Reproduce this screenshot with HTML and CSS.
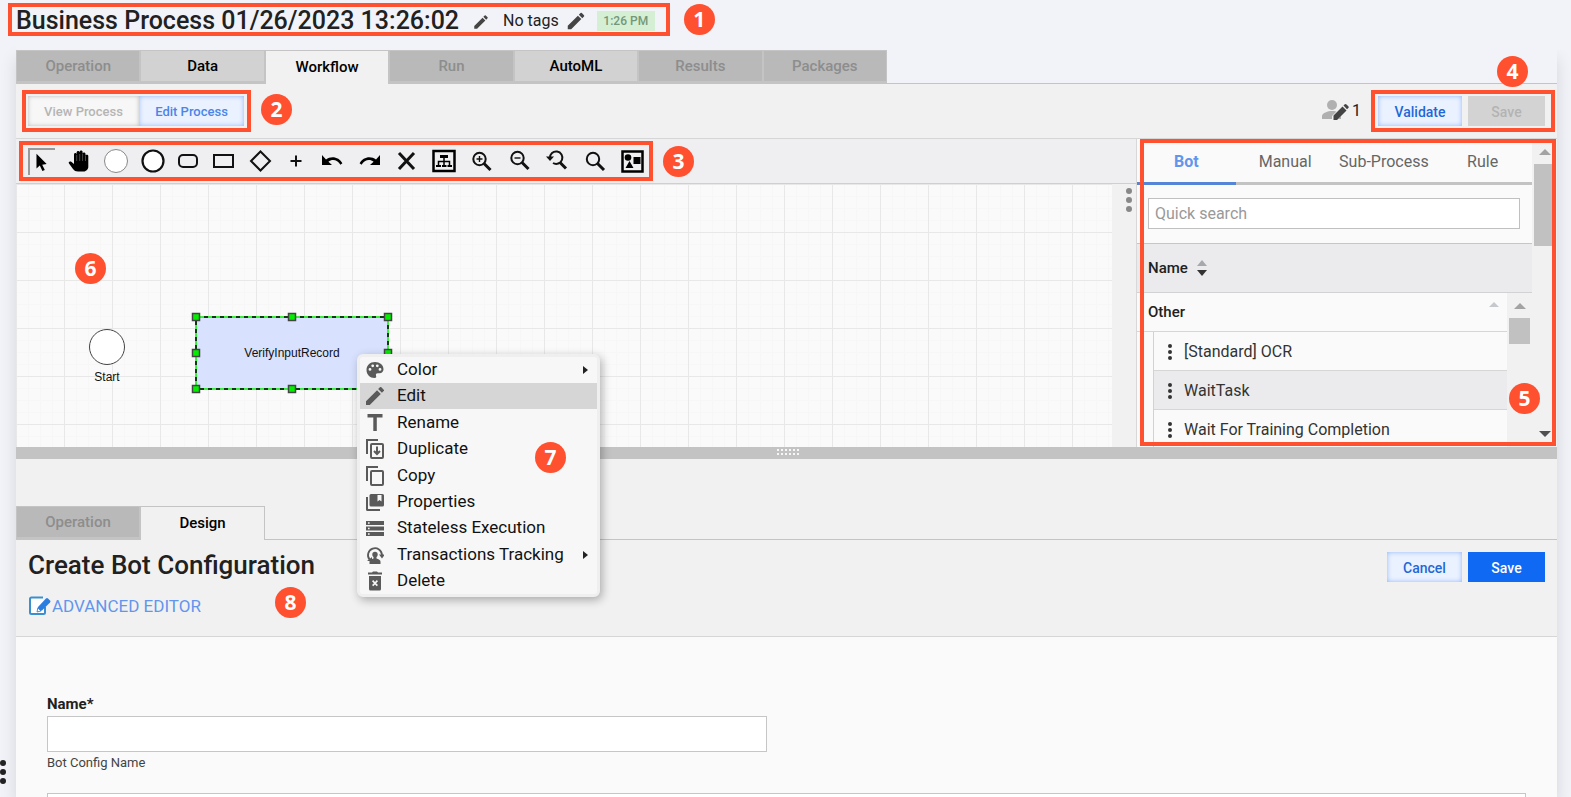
FILE: index.html
```html
<!DOCTYPE html>
<html lang="en">
<head>
    <meta charset="UTF-8">
    <meta name="viewport" content="width=device-width, initial-scale=1.0">
    <title>Business Process - Workflow</title>
    <link rel="stylesheet" href="styles.css">
</head>
<body>
    <header class="page-header">
        <div class="title-row callout">
            <h1>Business Process 01/26/2023 13:26:02</h1>
            <button class="icon-btn title-edit" aria-label="Edit title"><svg width="18" height="18" viewBox="0 0 24 24"><path d="M3 17.25V21h3.750L17.810 9.940l-3.750-3.750L3 17.250zM20.710 7.040a1 1 0 0 0 0-1.410l-2.340-2.340a1 1 0 0 0-1.410 0l-1.830 1.830 3.750 3.750 1.830-1.830z"/></svg></button>
            <span class="tags">No tags</span>
            <button class="icon-btn" aria-label="Edit tags"><svg width="22" height="22" viewBox="0 0 24 24"><path d="M3 17.25V21h3.750L17.810 9.940l-3.750-3.750L3 17.250zM20.710 7.040a1 1 0 0 0 0-1.410l-2.340-2.340a1 1 0 0 0-1.410 0l-1.830 1.830 3.750 3.750 1.830-1.830z"/></svg></button>
            <span class="time">1:26 PM</span>
            <span class="marker marker-1">1</span>
        </div>
    </header>

    <main class="content">
        <nav class="tabs main-tabs">
            <button class="tab" disabled>Operation</button>
            <button class="tab">Data</button>
            <button class="tab active">Workflow</button>
            <button class="tab" disabled>Run</button>
            <button class="tab">AutoML</button>
            <button class="tab" disabled>Results</button>
            <button class="tab" disabled>Packages</button>
        </nav>

        <div class="action-bar">
            <div class="mode-switch callout">
                <button class="mode" disabled>View Process</button>
                <button class="mode selected">Edit Process</button>
                <span class="marker marker-2">2</span>
            </div>
            <div class="editors">
                <svg width="28" height="22" viewBox="0 0 28 22"><circle cx="11" cy="6" r="5" fill="#b0b0b0"/><path d="M1 20v-3c0-3 6-5 10-5 4 0 9 2 9 5v3z" fill="#b0b0b0"/><path d="M11 21v-4L22 6l5 4-11 11z" fill="#f1f1f1"/><path d="M12.500 21v-4.500l9-9 4 4-9.500 9.500zM22.500 6.500l1-1q1-1 2 0l1.800 1.800q.9.900 0 1.800L26 10.300z" fill="#444"/></svg>
                <span>1</span>
            </div>
            <div class="save-group callout">
                <button class="btn btn-light">Validate</button>
                <button class="btn" disabled>Save</button>
                <span class="marker marker-4">4</span>
            </div>
        </div>

        <section class="workspace">
            <div class="editor">
                <div class="toolbar">
                    <div class="tools callout">
                        <button class="tool pressed" aria-label="Select"><svg width="27" height="27" viewBox="0 0 27 27"><path d="M7 4v16l3.600-3.200 2.800 6 2.600-1.300-2.800-5.600 4.800-.7z"/></svg></button>
                        <button class="tool" aria-label="Pan"><svg width="24" height="26" viewBox="0 0 24 26"><path d="M6 21 2 15.500c-1-1.500 1-2.600 2.600-1.400L7 16V6.500c0-2 2.600-2 2.600 0V4.600c0-2.200 3-2.200 3 0V4c0-2 3-2 3 0v2c0-2 2.900-2 2.900 0v2c0-1.800 2.800-1.800 2.800 0v11c0 2-2 4.500-4.600 4.500H11c-2.300 0-3.800-.8-5-2.500z"/><path d="M9.700 7v6M12.700 6v7M15.600 6v7M18.500 8v5" stroke="#777" stroke-width=".6"/></svg></button>
                        <button class="tool" aria-label="Start event"><svg width="26" height="26" viewBox="0 0 26 26"><circle cx="13" cy="13" r="11.500" fill="#fff" stroke="#888"/></svg></button>
                        <button class="tool" aria-label="End event"><svg width="26" height="26" viewBox="0 0 26 26"><circle cx="13" cy="13" r="10.500" fill="#fff" stroke="#111" stroke-width="2.200"/></svg></button>
                        <button class="tool shape" aria-label="Task"><svg width="24" height="24" viewBox="0 0 24 24" class="line"><rect x="2" y="6" width="18" height="12" rx="4"/></svg></button>
                        <button class="tool shape" aria-label="Rectangle"><svg width="24" height="24" viewBox="0 0 24 24" class="line"><rect x="1" y="6" width="19" height="12"/></svg></button>
                        <button class="tool shape" aria-label="Gateway"><svg width="24" height="24" viewBox="0 0 24 24" class="line"><path d="M11.500 2.500 21 12l-9.500 9.500L2 12z"/></svg></button>
                        <button class="tool shape" aria-label="Add"><svg width="24" height="24" viewBox="0 0 24 24" class="line"><path d="M11 6.500v11M5.500 12h11"/></svg></button>
                        <button class="tool shape" aria-label="Undo"><svg width="24" height="24" viewBox="0 0 24 24"><path d="M1 6v10h10l-3.600-3.200c3.600-3 9.400-2 12 3l2-1.500c-3-6.500-11.400-8-16.400-3.800z"/></svg></button>
                        <button class="tool" aria-label="Redo"><svg width="24" height="24" viewBox="0 0 24 24"><path d="M22 6v10H12l3.600-3.200c-3.600-3-9.400-2-12 3l-2-1.500c3-6.500 11.400-8 16.400-3.800z"/></svg></button>
                        <button class="tool" aria-label="Delete"><svg width="24" height="24" viewBox="0 0 24 24" class="line bold"><path d="m4 4 15 16M19 4 4 20"/></svg></button>
                        <button class="tool wide" aria-label="Auto layout"><svg width="26" height="26" viewBox="0 0 26 26"><path d="M2.500 3h21v20h-21z" fill="none" stroke="#000" stroke-width="2.500"/><path d="M9 7h8v3H9zM5 17h5v2H5zM11 17h4.500v2H11zM16.500 17H21v2h-4.500z"/><path d="M13 10v7M7.500 17v-3.500h11V17" fill="none" stroke="#000" stroke-width="1.500"/></svg></button>
                        <button class="tool wide" aria-label="Zoom in"><svg width="24" height="24" viewBox="0 0 24 24" class="line"><circle cx="9.500" cy="10" r="6.200"/><path d="M9.500 7v6M6.500 10h6" stroke-width="1.400"/><path d="m14 14.500 6.500 6.500" stroke-width="3"/></svg></button>
                        <button class="tool wide" aria-label="Zoom out"><svg width="24" height="24" viewBox="0 0 24 24" class="line"><circle cx="9.500" cy="9" r="6.200"/><path d="M6.500 9h6" stroke-width="1.400"/><path d="m14 13.500 6.500 6.500" stroke-width="3"/></svg></button>
                        <button class="tool wide" aria-label="Reset zoom"><svg width="24" height="24" viewBox="0 0 24 24" class="line"><path d="M4 9a6.200 6.200 0 1 1 3 5"/><path d="m14 13.500 6 6" stroke-width="3"/><path d="M0 7.500h8L4 12z" fill="#111" stroke="none"/></svg></button>
                        <button class="tool wide" aria-label="Zoom"><svg width="24" height="24" viewBox="0 0 24 24" class="line"><circle cx="9" cy="10" r="6.200"/><path d="m13.500 14.500 6.500 6.500" stroke-width="3"/></svg></button>
                        <button class="tool wide" aria-label="Fit"><svg width="26" height="26" viewBox="0 0 26 26"><path d="M1.500 3.500h20v20h-20z" fill="none" stroke="#000" stroke-width="2.500"/><circle cx="7" cy="9.500" r="3.300"/><path d="M12.500 9h7v7h-7zM4.500 20l4-7 4 7z"/></svg></button>
                        <span class="marker marker-3">3</span>
                    </div>
                </div>

                <div class="canvas-row">
                    <div class="canvas">
                        <span class="marker marker-6">6</span>
                        <div class="node-start">
                            <span class="start-circle"></span>
                            <span>Start</span>
                        </div>
                        <div class="node-task">
                            <svg class="selection" width="202" height="82" viewBox="0 0 202 82">
                                <rect x="5" y="5" width="192" height="72" fill="#d8e2ff" stroke="#00f000" stroke-width="1.500"/>
                                <rect x="5" y="5" width="192" height="72" fill="none" stroke="#000" stroke-width="1.500" stroke-dasharray="4"/>
                                <g fill="#00f000" stroke="#444" stroke-width="1.500">
                                    <path d="M1.500 1.500h7v7h-7zM97.500 1.500h7v7h-7zM193.500 1.500h7v7h-7zM1.500 37.500h7v7h-7zM193.500 37.500h7v7h-7zM1.500 73.500h7v7h-7zM97.500 73.500h7v7h-7zM193.500 73.500h7v7h-7z"/>
                                </g>
                            </svg>
                            <span class="task-label">VerifyInputRecord</span>
                        </div>

                        <div class="context-menu" role="menu">
                            <button role="menuitem"><svg width="18" height="18" viewBox="0 0 18 18"><path fill-rule="evenodd" d="M9 1C4 1 .5 4.500.5 9S4 17 8.500 17c1.500 0 2-1 1.600-2-.6-1.700 0-2.700 1.700-2.700h1.700c2.500 0 4-1.700 4-4C17.500 4 13.700 1 9 1zM4 9.800a1.400 1.400 0 1 1 0-2.800 1.400 1.400 0 0 1 0 2.800zM6.700 6.200a1.400 1.400 0 1 1 0-2.800 1.400 1.400 0 0 1 0 2.800zM11.300 6.200a1.400 1.400 0 1 1 0-2.800 1.400 1.400 0 0 1 0 2.800zM14 9.800A1.400 1.400 0 1 1 14 7a1.400 1.400 0 0 1 0 2.800z"/></svg><span>Color</span><i class="arrow"></i></button>
                            <button role="menuitem" class="hover"><svg width="18" height="18" viewBox="3 3 18 18"><path d="M3 17.250V21h3.750L17.810 9.940l-3.750-3.750L3 17.250zM20.710 7.040a1 1 0 0 0 0-1.410l-2.340-2.340a1 1 0 0 0-1.410 0l-1.830 1.830 3.750 3.750 1.830-1.830z"/></svg><span>Edit</span></button>
                            <button role="menuitem"><svg width="18" height="18" viewBox="0 0 18 18"><path d="M1.500 0h15v3.500h-5.700V17H7.300V3.500H1.500z"/></svg><span>Rename</span></button>
                            <button role="menuitem"><svg width="18" height="20" viewBox="0 0 18 20" class="outline"><path d="M1 15V1h11"/><rect x="5" y="5" width="12" height="14" rx="1"/><path d="M11 7.500v7M8 12l3 3 3-3"/></svg><span>Duplicate</span></button>
                            <button role="menuitem"><svg width="18" height="20" viewBox="0 0 18 20" class="outline"><path d="M1 15V1h11"/><rect x="5" y="5" width="12" height="14" rx="1"/></svg><span>Copy</span></button>
                            <button role="menuitem"><svg width="18" height="18" viewBox="0 0 18 18"><path d="M0 4h2v12h12v2H1.500Q0 18 0 16.500z"/><path fill-rule="evenodd" d="M5 1h11.500Q18 1 18 2.500V12q0 1.500-1.500 1.500H5Q3.500 13.500 3.500 12V2.500Q3.500 1 5 1zm6.500 1v6.500l2-1.500 2 1.500V2z"/></svg><span>Properties</span></button>
                            <button role="menuitem"><svg width="18" height="18" viewBox="0 0 18 18"><path fill-rule="evenodd" d="M0 2h18v4H0zM0 7.500h18v4H0zM0 13h18v4H0zM2 3.200v1.600h1.600V3.200zM2 8.700v1.600h1.600V8.700zM2 14.200v1.600h1.600v-1.600z"/></svg><span>Stateless Execution</span></button>
                            <button role="menuitem"><svg width="18" height="18" viewBox="0 0 18 18"><path d="M3.500 13.500A7 7 0 1 1 16 9" fill="none" stroke="#5a5a5a" stroke-width="1.800"/><path d="M13 8.500h6l-3 4zM1 15h5v-4z"/><circle cx="9" cy="8.500" r="2.700"/><path d="M7.500 10h3v2.500c2 .5 4 1.500 4 3V18h-11v-2.500c0-1.500 2-2.500 4-3z"/></svg><span>Transactions Tracking</span><i class="arrow"></i></button>
                            <button role="menuitem"><svg width="18" height="20" viewBox="0 0 18 20"><path d="M2 1.500h4L7 .5h4l1 1h4v2H2z"/><path fill-rule="evenodd" d="M3 5h12v13q0 1.500-1.500 1.500h-9Q3 19.500 3 18zm3 5.300L7.900 12.200 6 14.100l1.200 1.200L9 13.400l1.800 1.900 1.200-1.200-1.900-1.900 1.900-1.900-1.200-1.200L9 11 7.200 9.100z"/></svg><span>Delete</span></button>
                            <span class="marker marker-7">7</span>
                        </div>
                    </div>
                    <button class="canvas-handle dots" aria-label="Panel options"><i></i><i></i><i></i></button>
                </div>
            </div>

            <aside class="palette callout">
                <div class="palette-body">
                    <nav class="palette-tabs">
                        <button class="palette-tab current">Bot</button>
                        <button class="palette-tab">Manual</button>
                        <button class="palette-tab">Sub-Process</button>
                        <button class="palette-tab">Rule</button>
                    </nav>
                    <div class="search-row">
                        <input type="text" placeholder="Quick search" aria-label="Quick search">
                    </div>
                    <div class="name-header">
                        Name
                        <svg width="10" height="18" viewBox="0 0 10 18"><path d="M5 1l5 6H0z" fill="#a5a8ac"/><path d="M5 17 0 11h10z" fill="#333"/></svg>
                    </div>
                    <div class="tree">
                        <div class="tree-body">
                            <div class="group">Other <i class="collapse"></i></div>
                            <ul>
                                <li><span class="dots"><i></i><i></i><i></i></span>[Standard] OCR</li>
                                <li class="shaded"><span class="dots"><i></i><i></i><i></i></span>WaitTask</li>
                                <li><span class="dots"><i></i><i></i><i></i></span>Wait For Training Completion</li>
                            </ul>
                        </div>
                        <div class="scrollbar inner"><i class="up"></i><i class="thumb"></i></div>
                    </div>
                </div>
                <div class="scrollbar outer"><i class="up"></i><i class="thumb"></i><i class="down"></i></div>
                <span class="marker marker-5">5</span>
            </aside>
        </section>

        <div class="splitter"><span></span></div>

        <section class="config">
            <nav class="tabs config-tabs">
                <button class="tab" disabled>Operation</button>
                <button class="tab active">Design</button>
            </nav>
            <div class="config-head">
                <div class="config-title">
                    <h2>Create Bot Configuration</h2>
                    <a href="#editor" class="advanced"><svg width="24" height="20" viewBox="0 0 24 20"><path d="M15 1.500H3.500Q2 1.500 2 3v13.500Q2 18 3.500 18h12Q17 18 17 16.500V11" fill="#fff" stroke="#3a8fd0" stroke-width="2"/><path d="m9 16 1-5 8-8.500q1-1 2 0l2 2q1 1 0 2l-8 8z" fill="#2a7de1"/><path d="m9 16 .8-4 3.200 3z" fill="#fff" stroke="#2a7de1" stroke-width=".8"/></svg>ADVANCED EDITOR</a>
                    <span class="marker marker-8">8</span>
                </div>
                <div class="config-buttons">
                    <button class="btn btn-light">Cancel</button>
                    <button class="btn btn-primary">Save</button>
                </div>
            </div>
            <form class="config-form">
                <label for="config-name">Name*</label>
                <input type="text" id="config-name" aria-describedby="name-help">
                <small id="name-help">Bot Config Name</small>
                <textarea aria-label="Description"></textarea>
            </form>
        </section>
    </main>

    <button class="drawer dots" aria-label="Open drawer"><i></i><i></i><i></i></button>
</body>
</html>
```
FILE: styles.css
```css
* {
    box-sizing: border-box;
}
body {
    margin: 0;
    height: 100vh;
    overflow: hidden;
    display: flex;
    flex-direction: column;
    padding: 0 14px 0 16px;
    background: #f2f3f8;
    color: #212121;
    font-family: Roboto, sans-serif;
    font-size: 16px;
}
button, input, textarea {
    font-family: inherit;
    border-radius: 0;
}
button {
    padding: 0;
    border: 0;
    background: none;
}
h1, h2 {
    margin: 0;
    font-size: 25px;
    font-weight: 500;
    line-height: 32px;
}

/* Red annotation frames and numbers */
.callout {
    position: relative;
}
.callout::before {
    content: "";
    position: absolute;
    inset: 0;
    z-index: 3;
    border: 4px solid #ff5030;
    pointer-events: none;
}
.marker {
    position: absolute;
    z-index: 6;
    width: 31px;
    height: 31px;
    border-radius: 50%;
    background: #ff5030;
    color: #fff;
    font-family: "Open Sans", sans-serif;
    font-size: 21px;
    font-weight: 700;
    line-height: 30px;
    text-align: center;
}
.marker-1 { left: calc(100% + 14px); top: 1px; }
.marker-2 { left: calc(100% + 10px); top: 4px; }
.marker-3 { left: calc(100% + 10px); top: 5px; }
.marker-4 { right: 27px; top: -34px; }
.marker-5 { right: 17px; bottom: 33px; }
.marker-6 { left: 59px; top: 69px; }
.marker-7 { right: 31px; top: 85px; }
.marker-8 { left: 247px; top: 39px; }

/* Header */
.page-header {
    position: relative;
    z-index: 1;
    height: 50px;
    flex-shrink: 0;
    margin-right: -14px;
    background: #f2f3f8;
}
.title-row {
    display: inline-flex;
    align-items: center;
    height: 33px;
    margin: 3px 0 0 -8px;
    padding: 2px 15px 0 8px;
}
.icon-btn {
    display: flex;
    fill: #444;
}
.title-edit {
    margin: 2px 13px 0 13px;
}
.tags {
    margin-right: 6px;
}
.time {
    margin-left: 10px;
    width: 58px;
    background: #d4efd4;
    color: #74977a;
    font-size: 12px;
    font-weight: 500;
    line-height: 20px;
    text-align: center;
}

/* Tabs */
.content {
    flex: 1;
    min-height: 0;
    display: flex;
    flex-direction: column;
    background: linear-gradient(#f2f3f8 34px, #f1f1f1 34px);
    box-shadow: 0 8px 16px rgba(0, 0, 0, 0.12);
}
.tabs {
    display: grid;
    height: 34px;
    flex-shrink: 0;
    border-bottom: 1px solid #c4c4c4;
}
.main-tabs {
    grid-template-columns: repeat(7, 1fr);
    padding-right: calc(100% - 871px);
}
.tab {
    height: 33px;
    border: 1px solid #c4c4c4;
    border-bottom-width: 2px;
    background: #d2d2d2;
    color: #000;
    font-size: 15px;
    font-weight: 500;
}
.tab:disabled {
    background: #b9b9b9;
    color: #8d8d8d;
}
.tab.active {
    height: 34px;
    padding-bottom: 2px;
    border-bottom: 0;
    background: #f1f1f1;
}

/* Action bar */
.action-bar {
    display: flex;
    align-items: flex-start;
    height: 55px;
    flex-shrink: 0;
    padding: 6px 2px 0 6px;
    border-bottom: 1px solid #d6d6d6;
}
.mode-switch {
    display: flex;
    padding: 6px 7px 6px 6px;
}
.mode {
    width: 111px;
    height: 30px;
    background: #f7f7f7;
    box-shadow: inset 0 0 4px #bbb;
    color: #b5b5b5;
    font-size: 13px;
    font-weight: 500;
}
.mode.selected {
    width: 105px;
    background: #ebf2ff;
    box-shadow: inset 0 0 5px #8fb6fb;
    color: #4a86e8;
}
.editors {
    display: flex;
    align-items: center;
    gap: 3px;
    margin: 9px 10px 0 auto;
}
.save-group {
    display: flex;
    gap: 6px;
    padding: 6px 10px 6px 7px;
}
.btn {
    width: 77px;
    height: 30px;
    padding-top: 2px;
    background: #d3d3d3;
    color: #b3b3b3;
    font-size: 14px;
    font-weight: 500;
}
.btn-light {
    width: 84px;
    background: #ebf2ff;
    box-shadow: inset 0 0 5px #8fb6fb;
    color: #1f68d6;
}
.btn-primary {
    background: #0f69f2;
    color: #fff;
}

/* Workspace */
.workspace {
    display: flex;
    height: 308px;
    flex-shrink: 0;
}
.editor {
    flex: 1;
    display: flex;
    flex-direction: column;
}
.toolbar {
    height: 45px;
    padding: 2px 3px;
    border-bottom: 1px solid #cfcfcf;
    background: #efeff1;
}
.tools {
    display: inline-flex;
    align-items: center;
    height: 40px;
    padding-left: 4px;
}
.tool {
    display: flex;
    align-items: center;
    justify-content: center;
    width: 37px;
    height: 36px;
}
.tool.shape {
    width: 36px;
}
.tool.wide {
    width: 38px;
}
.tool.pressed svg {
    border: solid #999;
    border-width: 2px 0 0 2px;
}
.line {
    fill: none;
    stroke: #111;
    stroke-width: 2;
}
.line.bold {
    stroke-width: 3;
}
.canvas-row {
    flex: 1;
    display: flex;
}
.canvas {
    position: relative;
    flex: 1;
    background-color: #fafafa;
    background-image:
        linear-gradient(90deg, transparent 47px, #e8e8e8 47px),
        linear-gradient(transparent 47px, #e8e8e8 47px),
        linear-gradient(90deg, transparent 11px, #f7f7f7 11px),
        linear-gradient(transparent 11px, #f7f7f7 11px);
    background-size: 48px 48px, 48px 48px, 12px 12px, 12px 12px;
    background-position: 1px 1px;
    font-family: "Liberation Sans", sans-serif;
    font-size: 12px;
    color: #111;
}
.node-start {
    position: absolute;
    left: 73px;
    top: 145px;
    display: flex;
    flex-direction: column;
    align-items: center;
    gap: 5px;
}
.start-circle {
    width: 36px;
    height: 36px;
    border: 1px solid #444;
    border-radius: 50%;
    background: #fff;
}
.node-task {
    position: absolute;
    left: 175px;
    top: 128px;
    display: grid;
    place-items: center;
}
.selection, .task-label {
    grid-area: 1 / 1;
}
.context-menu {
    position: absolute;
    left: 341px;
    top: 170px;
    z-index: 5;
    display: flex;
    flex-direction: column;
    justify-content: space-between;
    width: 243px;
    height: 243px;
    border: 3px solid #efefef;
    border-radius: 6px;
    background: #f7f7f7;
    box-shadow: 2px 3px 10px rgba(0, 0, 0, 0.3);
}
.context-menu button {
    display: flex;
    align-items: center;
    gap: 13px;
    height: 26px;
    padding: 0 9px 0 6px;
    color: #111;
    font-family: Roboto, sans-serif;
    font-size: 17px;
}
.context-menu button span {
    padding-bottom: 2px;
}
.context-menu button.hover {
    background: #d6d6d6;
}
.context-menu svg {
    fill: #5a5a5a;
}
.context-menu .outline {
    fill: none;
    stroke: #5a5a5a;
    stroke-width: 2px;
}
.arrow {
    margin-left: auto;
    border: solid transparent;
    border-width: 4px 0 4px 5px;
    border-left-color: #222;
}
.dots {
    display: flex;
    flex-direction: column;
    align-items: center;
    gap: 3px;
}
.dots i {
    width: 4px;
    height: 4px;
    border-radius: 50%;
    background: #333;
}
.canvas-handle {
    width: 24px;
    padding: 4px 0 0 10px;
    background: #f1f1f1;
}
.canvas-handle i {
    width: 6px;
    height: 6px;
    background: #888;
}

/* Palette */
.palette {
    display: flex;
    width: 421px;
    border-left: 1px solid #d8d8d8;
    background: #fafafa;
}
.palette::before {
    left: 3px;
    right: 1px;
    bottom: 1px;
}
.palette-body {
    flex: 1;
    display: flex;
    flex-direction: column;
}
.palette-tabs {
    display: grid;
    grid-template-columns: repeat(4, 1fr);
}
.palette-tab {
    height: 46px;
    padding-top: 2px;
    border-bottom: 3px solid #c3c3c3;
    color: #666;
    font-size: 16px;
}
.palette-tab.current {
    border-color: #5585d6;
    color: #6495ed;
    font-weight: 700;
}
.search-row {
    height: 59px;
    padding: 13px 12px 0 11px;
    border-bottom: 1px solid #c6c6c6;
}
.search-row input {
    width: 100%;
    height: 31px;
    padding: 0 6px;
    border: 1px solid #c0c0c0;
    font-size: 16px;
}
.search-row input::placeholder {
    color: #999;
}
.name-header {
    display: flex;
    align-items: center;
    gap: 9px;
    height: 49px;
    padding-left: 11px;
    border-bottom: 1px solid #d2d2d4;
    background: #ebebed;
    font-size: 15px;
    font-weight: 500;
}
.tree {
    flex: 1;
    min-height: 0;
    display: flex;
    overflow: hidden;
}
.tree-body {
    flex: 1;
}
.group {
    display: flex;
    justify-content: space-between;
    height: 39px;
    padding: 0 8px 0 11px;
    border-bottom: 1px solid #d6d6d6;
    font-size: 15px;
    font-weight: 500;
    line-height: 38px;
}
.collapse {
    margin-top: 9px;
    height: 5px;
    border: solid transparent;
    border-width: 0 5px 5px;
    border-bottom-color: #c5c8cc;
}
.tree ul {
    margin: 0 0 0 16px;
    padding: 0;
    border-left: 1px solid #d2d2d2;
    list-style: none;
}
.tree li {
    display: flex;
    align-items: center;
    gap: 12px;
    height: 39px;
    padding-left: 14px;
    border-bottom: 1px solid #d6d6d6;
    color: #333;
}
.tree li.shaded {
    background: #ebebed;
}
.tree .dots {
    gap: 2px;
    padding-top: 2px;
}
.scrollbar {
    display: flex;
    flex-direction: column;
    align-items: center;
    width: 25px;
    background: #f1f1f1;
}
.scrollbar .up {
    margin: 10px 0 9px;
    border: solid transparent;
    border-width: 0 6px 6px;
    border-bottom-color: #a3a3a3;
}
.scrollbar .thumb {
    width: 21px;
    height: 26px;
    background: #c1c1c1;
}
.scrollbar .down {
    margin: auto 0 10px;
    border: solid transparent;
    border-width: 6px 6px 0;
    border-top-color: #505050;
}
.scrollbar.outer .thumb {
    height: 82px;
}
.splitter {
    display: flex;
    align-items: center;
    justify-content: center;
    height: 12px;
    flex-shrink: 0;
    background: #c3c3c3;
}
.splitter span {
    width: 24px;
    height: 8px;
    background: conic-gradient(#f7f7f7 25%, transparent 0) 0 0 / 4px 4px;
}

/* Bot configuration */
.config {
    flex: 1;
    min-height: 0;
    display: flex;
    flex-direction: column;
    padding-top: 47px;
}
.config-tabs {
    grid-template-columns: 124px 125px;
}
.config-head {
    display: flex;
    justify-content: space-between;
    height: 97px;
    flex-shrink: 0;
    padding: 8px 12px 0;
    border-bottom: 1px solid #d6d6d6;
}
.config-title {
    position: relative;
}
h2 {
    font-size: 26px;
    line-height: 34px;
}
.advanced {
    display: flex;
    align-items: center;
    margin-top: 14px;
    color: #6495ed;
    font-size: 17px;
    line-height: 20px;
    text-decoration: none;
}
.config-buttons {
    display: flex;
    gap: 6px;
    padding-top: 4px;
}
.config-buttons .btn-light {
    width: 75px;
}
.config-form {
    flex: 1;
    min-height: 0;
    display: flex;
    flex-direction: column;
    align-items: flex-start;
    overflow: hidden;
    padding: 57px 31px 0;
    background: #fafafa;
}
.config-form label {
    font-size: 15px;
    font-weight: 700;
    line-height: 20px;
}
.config-form input {
    width: 720px;
    max-width: 100%;
    height: 36px;
    flex-shrink: 0;
    margin: 2px 0;
    border: 1px solid #c6c6c6;
    background: #fff;
}
.config-form small {
    color: #444;
    font-size: 13px;
    line-height: 18px;
}
.config-form textarea {
    width: 100%;
    height: 80px;
    flex-shrink: 0;
    margin-top: 21px;
    border: 1px solid #c6c6c6;
    resize: none;
}
.drawer {
    position: fixed;
    left: 0;
    bottom: 13px;
}
.drawer i {
    width: 6px;
    height: 6px;
    background: #222;
}
```
